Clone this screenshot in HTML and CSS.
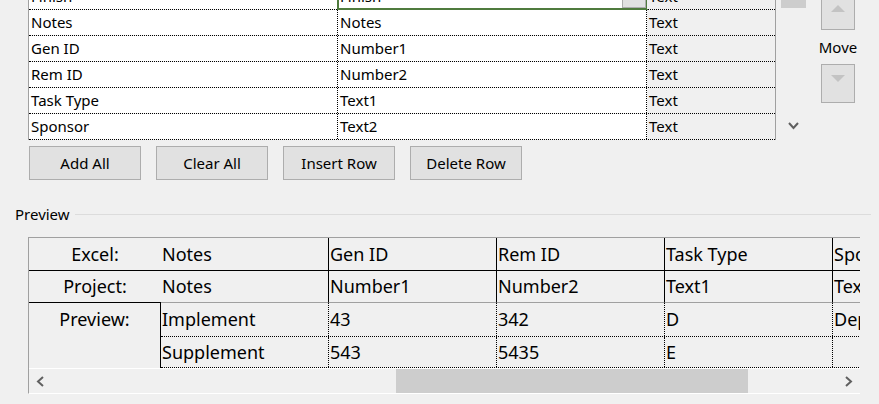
FILE: index.html
```html
<!DOCTYPE html>
<html lang="en">
<head>
	<meta charset="UTF-8">
	<title>Import Mapping</title>
	<link rel="stylesheet" href="styles.css">
</head>
<body>
	<div class="top">
		<div class="grid">
			<div class="rows">
				<div class="row">
					<div class="c c1">Finish</div>
					<div class="c c2 editing">Finish<span class="drop"></span></div>
					<div class="c c3">Text</div>
				</div>
				<div class="row">
					<div class="c c1">Notes</div>
					<div class="c c2">Notes</div>
					<div class="c c3">Text</div>
				</div>
				<div class="row">
					<div class="c c1">Gen ID</div>
					<div class="c c2">Number1</div>
					<div class="c c3">Text</div>
				</div>
				<div class="row">
					<div class="c c1">Rem ID</div>
					<div class="c c2">Number2</div>
					<div class="c c3">Text</div>
				</div>
				<div class="row">
					<div class="c c1">Task Type</div>
					<div class="c c2">Text1</div>
					<div class="c c3">Text</div>
				</div>
				<div class="row">
					<div class="c c1">Sponsor</div>
					<div class="c c2">Text2</div>
					<div class="c c3">Text</div>
				</div>
			</div>
		</div>
		<div class="vscroll">
			<div class="vthumb"></div>
			<svg class="vdown" width="11" height="8" viewBox="0 0 11 8"><polyline points="1,1 5.5,6 10,1" fill="none" stroke="#606060" stroke-width="2"/></svg>
		</div>
		<div class="move">
			<div class="mbtn up"><svg width="14" height="7" viewBox="0 0 14 7"><polygon points="0,7 7,0 14,7" fill="#c3c3c3"/></svg></div>
			<div class="mlabel">Move</div>
			<div class="mbtn down"><svg width="14" height="7" viewBox="0 0 14 7"><polygon points="0,0 14,0 7,7" fill="#c3c3c3"/></svg></div>
		</div>
	</div>

	<div class="buttons">
		<div class="btn">Add All</div>
		<div class="btn">Clear All</div>
		<div class="btn">Insert Row</div>
		<div class="btn">Delete Row</div>
	</div>

	<div class="group-head">
		<span>Preview</span>
		<div class="group-line"></div>
	</div>

	<div class="preview">
		<div class="prow excel">
			<div class="lab">Excel:</div>
			<div class="pc">Notes</div>
			<div class="pc">Gen ID</div>
			<div class="pc">Rem ID</div>
			<div class="pc">Task Type</div>
			<div class="pc">Sponsor</div>
		</div>
		<div class="prow project">
			<div class="lab">Project:</div>
			<div class="pc">Notes</div>
			<div class="pc">Number1</div>
			<div class="pc">Number2</div>
			<div class="pc">Text1</div>
			<div class="pc">Text2</div>
		</div>
		<div class="pdata">
			<div class="plab">Preview:</div>
			<div class="drows">
				<div class="drow d1">
					<div class="dc">Implement</div>
					<div class="dc">43</div>
					<div class="dc">342</div>
					<div class="dc">D</div>
					<div class="dc">Dept</div>
				</div>
				<div class="drow d2">
					<div class="dc">Supplement</div>
					<div class="dc">543</div>
					<div class="dc">5435</div>
					<div class="dc">E</div>
					<div class="dc"></div>
				</div>
			</div>
		</div>
		<div class="hscroll">
			<div class="harrow"><svg width="9" height="11" viewBox="0 0 9 11"><polyline points="7,1 2,5.5 7,10" fill="none" stroke="#606060" stroke-width="2"/></svg></div>
			<div class="htrack"><div class="hthumb"></div></div>
			<div class="harrow"><svg width="9" height="11" viewBox="0 0 9 11"><polyline points="2,1 7,5.5 2,10" fill="none" stroke="#606060" stroke-width="2"/></svg></div>
		</div>
	</div>
</body>
</html>
```

FILE: styles.css
```css
*{margin: 0;padding: 0;box-sizing: border-box;}
body{
	background: #f0f0f0;
	font-family: "Noto Sans", "Open Sans", sans-serif;
	color: #000;
	width: 879px;
	height: 404px;
	overflow: hidden;
}

/* mapping grid */
.top{
	display: flex;
	height: 140px;
	overflow: hidden;
}
.grid{
	margin-left: 28px;
	width: 748px;
	border-left: 1px solid #a0a0a0;
	border-right: 1px solid #a0a0a0;
	flex-shrink: 0;
}
.rows{
	margin-top: -16px;
}
.row{
	display: flex;
	height: 26px;
	border-bottom: 1px dotted #000;
}
.c{
	height: 25px;
	font-size: 15px;
	line-height: 25px;
	padding-left: 2px;
	white-space: nowrap;
	overflow: hidden;
}
.c1, .c2{
	width: 309px;
	background: #fff;
	border-right: 1px dotted #000;
}
.c3{
	width: 128px;
	background: #f0f0f0;
}
.editing{
	display: flex;
	justify-content: space-between;
	align-items: flex-end;
	outline: 2px solid #4f7b3d;
	outline-offset: -1px;
	overflow: visible;
}
.drop{
	width: 24px;
	height: 19px;
	margin-bottom: 1px;
	background: #e1e1e1;
	border: 1px solid #adadad;
}
.vscroll{
	width: 25px;
	margin-left: 5px;
	display: flex;
	flex-direction: column;
	align-items: center;
	flex-shrink: 0;
}
.vthumb{
	width: 25px;
	height: 8px;
	background: #cdcdcd;
}
.vdown{
	margin-top: 114px;
}
.move{
	width: 34px;
	margin-left: 15px;
	display: flex;
	flex-direction: column;
	align-items: center;
	flex-shrink: 0;
}
.mbtn{
	width: 34px;
	height: 39px;
	background: #e1e1e1;
	border: 1px solid #adadad;
	display: flex;
	justify-content: center;
}
.mbtn.up{
	margin-top: -9px;
	padding-top: 13px;
}
.mbtn.down{
	padding-top: 10px;
}
.mlabel{
	height: 34px;
	font-size: 15px;
	line-height: 34px;
}

/* buttons */
.buttons{
	display: flex;
	gap: 15px;
	margin: 6px 0 0 29px;
}
.btn{
	width: 112px;
	height: 34px;
	background: #e1e1e1;
	border: 1px solid #adadad;
	font-size: 15px;
	line-height: 32px;
	text-align: center;
}

/* preview group */
.group-head{
	display: flex;
	align-items: center;
	height: 20px;
	margin-top: 24px;
	padding-left: 15px;
	margin-right: 8px;
	font-size: 15px;
}
.group-line{
	flex: 1;
	height: 1px;
	background: #dcdcdc;
	margin-left: 5px;
}
.preview{
	margin: 13px 0 0 28px;
	width: 832px;
	border-top: 1px solid #a0a0a0;
	border-left: 1px solid #a0a0a0;
	border-bottom: 1px solid #fff;
	overflow: hidden;
	font-size: 18px;
}
.prow, .drow{
	display: flex;
	white-space: nowrap;
}
.lab{
	width: 132px;
	flex-shrink: 0;
	text-align: center;
}
.pc, .dc{
	width: 168px;
	flex-shrink: 0;
	padding-left: 1px;
	overflow: hidden;
}
.pc{
	border-right: 1px solid #000;
}
.excel{
	height: 33px;
	line-height: 32px;
	border-bottom: 1px solid #000;
}
.project .lab, .project .pc{
	height: 32px;
	line-height: 31px;
	border-bottom: 1px solid #a0a0a0;
}
.project .lab{
	border-bottom-color: #000;
}
.pdata{
	display: flex;
}
.plab{
	width: 132px;
	flex-shrink: 0;
	border-right: 1px solid #000;
	text-align: center;
	line-height: 33px;
}
.drow{
	border-bottom: 1px dotted #000;
}
.dc{
	border-right: 1px dotted #000;
}
.d1{
	height: 34px;
	line-height: 33px;
}
.d2{
	height: 31px;
	line-height: 30px;
}
.hscroll{
	display: flex;
	height: 25px;
	border-top: 1px solid #fff;
}
.harrow{
	width: 23px;
	flex-shrink: 0;
	display: flex;
	align-items: center;
	justify-content: center;
}
.htrack{
	flex: 1;
}
.hthumb{
	margin-left: 344px;
	width: 352px;
	height: 24px;
	background: #cdcdcd;
}
```
